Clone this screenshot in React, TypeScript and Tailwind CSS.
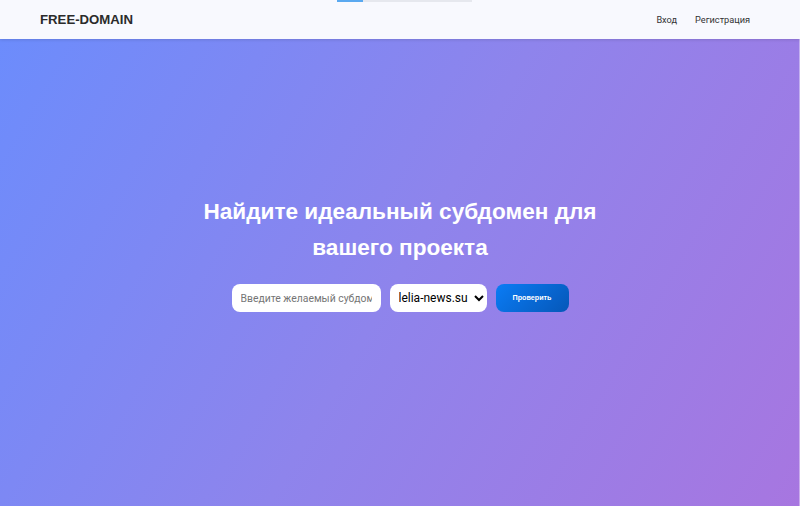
export default function App() {
  return (
    <div
      className="relative min-h-[506px] w-full overflow-hidden"
      style={{ fontFamily: '"Liberation Sans", Arial, sans-serif' }}
    >
      {/* loading bar at the very top */}
      <div className="absolute left-[337px] top-0 z-20 flex h-[2px] w-[135px]">
        <div className="h-full w-[26px] bg-[#5aa9f0]" />
        <div className="h-full flex-1 bg-[#e6e8ee]" />
      </div>

      <header className="relative z-10 flex h-[39px] items-center justify-between bg-[#f8f9fe] pl-10 pr-[50px] shadow-[0_1px_3px_rgba(0,0,0,0.12)]">
        <div className="text-[13.2px] font-bold text-[#2b2b2b]">FREE-DOMAIN</div>
        <nav className="flex items-center gap-[18px] font-['Roboto',sans-serif] text-[9.2px] text-[#333]">
          <a>Вход</a>
          <a>Регистрация</a>
        </nav>
      </header>

      <main className="flex h-[467px] flex-col items-center bg-[linear-gradient(120deg,#6c8cfc_0%,#8e84ec_50%,#a776e0_100%)] pt-[155px]">
        <h1 className="w-[420px] text-center text-[22.6px] font-bold leading-[36px] text-white">
          Найдите идеальный субдомен для вашего проекта
        </h1>

        <form className="mt-[18px] flex items-center gap-[9px] font-['Roboto',sans-serif]">
          <input
            className="h-[28px] w-[149px] rounded-[8px] bg-white px-[9px] text-[10.4px] text-[#333] outline-none placeholder:text-[#757575]"
            placeholder="Введите желаемый субдомен"
          />
          <select className="h-[28px] w-[97px] rounded-[8px] bg-white pl-[5px] pr-[2px] text-[12px] text-black outline-none">
            <option>lelia-news.su</option>
          </select>
          <button
            type="button"
            className="h-[28px] w-[73px] rounded-[8px] bg-[linear-gradient(135deg,#0a7cf5,#0657b8)] font-['Liberation_Sans',sans-serif] text-[7.2px] font-bold text-white"
          >
            Проверить
          </button>
        </form>
      </main>

      <div className="absolute right-0 top-[39px] h-[467px] w-[1px] bg-white/40" />
    </div>
  );
}
